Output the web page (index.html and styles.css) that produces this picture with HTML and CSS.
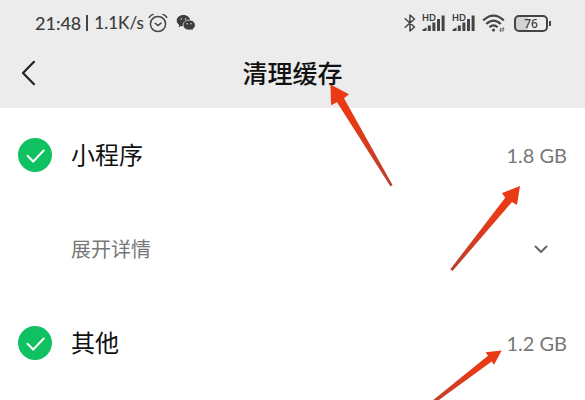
FILE: index.html
```html
<!DOCTYPE html>
<html lang="zh-CN">
<head>
<meta charset="UTF-8">
<meta name="viewport" content="width=device-width, initial-scale=1.0">
<title>清理缓存</title>
<link rel="stylesheet" href="styles.css">
</head>
<body>
<header class="top">
    <div class="status">
        <div class="status-left">
            <span class="time">21:48</span>
            <span class="divider"></span>
            <span class="speed">1.1K/s</span>
            <svg class="alarm" width="20" height="20" viewBox="0 0 20 20" fill="none" stroke="#444" stroke-width="1.5" stroke-linecap="round">
                <circle cx="10" cy="11" r="7.6"/>
                <path d="M7.2 10.2l2.800 2.400 3-2.400M1.200 4.400Q2.600 2.200 5 1.400M18.800 4.400Q17.400 2.200 15 1.400"/>
            </svg>
            <svg class="wechat" width="20" height="18" viewBox="0 0 20 18">
                <path fill="#3c3c3c" d="M7.400 1C3.500 1 .7 3.500.7 6.600c0 1.900 1 3.400 2.500 4.500l-.6 2.100 2.400-1.300c.8.2 1.600.3 2.400.3 3.900 0 6.800-2.500 6.800-5.600S11.300 1 7.400 1z"/>
                <path fill="#3c3c3c" stroke="#ececec" stroke-width=".8" d="M13.100 6.100c-3.500 0-6 2.200-6 5s2.500 5 6 5c.7 0 1.400-.1 2-.3l2.200 1.200-.5-1.900c1.500-1 2.500-2.300 2.500-4 0-2.800-2.700-5-6.200-5z"/>
                <g fill="#ececec">
                    <circle cx="5.200" cy="5" r=".8"/><circle cx="9.600" cy="5" r=".8"/>
                    <circle cx="11.200" cy="9.800" r=".7"/><circle cx="15" cy="9.800" r=".7"/>
                </g>
            </svg>
        </div>
        <div class="status-right">
            <svg width="12" height="20" viewBox="0 0 12 20" fill="none" stroke="#444" stroke-width="1.500" stroke-linejoin="round" stroke-linecap="round">
                <path d="M1.200 5.800l9.300 8.200L6 18V2l4.500 4-9.300 8.200"/>
            </svg>
            <div class="signal">
                <span class="hd">HD</span>
                <svg width="24" height="18" viewBox="0 0 24 18" fill="#444">
                    <path d="M.5 17v-1.500l4-2v3.500zM5.800 11.500h3V17h-3zM10.400 8.500h3V17h-3zM15 5h3v12h-3zM19.600 1.500h3V17h-3z"/>
                </svg>
            </div>
            <div class="signal">
                <span class="hd">HD</span>
                <svg width="24" height="18" viewBox="0 0 24 18" fill="#444">
                    <path d="M.5 17v-1.500l4-2v3.500zM5.800 11.500h3V17h-3zM10.400 8.500h3V17h-3zM15 5h3v12h-3zM19.600 1.500h3V17h-3z"/>
                </svg>
            </div>
            <svg class="wifi" width="24" height="20" viewBox="0 0 24 20" fill="none" stroke="#444" stroke-width="2.200">
                <path d="M1.200 7.400Q11.500-2.200 21.800 7.400M4.300 11Q11.500 4.200 18.700 11M7.400 14.300Q11.500 10.500 15.600 14.300"/>
                <circle cx="11.500" cy="17" r="1.600" fill="#444" stroke="none"/>
                <path stroke-width="1" d="M18.800 14.800v3.700M18.800 18.500l-1.300-1.200M21 18.500v-3.700l1.300 1.200"/>
            </svg>
            <div class="battery"><span class="level">76</span></div>
        </div>
    </div>
    <div class="nav">
        <button type="button" class="back" aria-label="返回">
            <svg width="16" height="26" viewBox="0 0 16 26" fill="none" stroke="#222" stroke-width="2.200" stroke-linecap="round" stroke-linejoin="round">
                <path d="M14 1.800L3 13l11 11.200"/>
            </svg>
        </button>
        <h1 class="title">清理缓存</h1>
    </div>
</header>

<main class="list">
    <div class="row">
        <span class="check">
            <input type="checkbox" id="mini" checked>
            <svg viewBox="0 0 34 34"><path d="M9.500 17.800l5.700 5.700L25.700 12.500"/></svg>
        </span>
        <label class="name" for="mini">小程序</label>
        <span class="size">1.8 GB</span>
    </div>
    <button type="button" class="row details">
        <span class="more">展开详情</span>
        <svg class="chevron" width="14" height="10" viewBox="0 0 14 10" fill="none" stroke="#666" stroke-width="2" stroke-linecap="round" stroke-linejoin="round">
            <path d="M1.500 2.500L7 8 12.500 2.500"/>
        </svg>
    </button>
    <div class="row">
        <span class="check">
            <input type="checkbox" id="other" checked>
            <svg viewBox="0 0 34 34"><path d="M9.500 17.800l5.700 5.700L25.700 12.500"/></svg>
        </span>
        <label class="name" for="other">其他</label>
        <span class="size">1.2 GB</span>
    </div>
</main>

<!-- red pointers over the title and the two sizes -->
<svg class="arrows" width="585" height="400" viewBox="0 0 585 400" aria-hidden="true">
    <defs>
        <linearGradient id="a1" gradientUnits="userSpaceOnUse" x1="331" y1="85" x2="391" y2="186"><stop offset=".3" stop-color="#ea3a15"/><stop offset="1" stop-color="#b9402f"/></linearGradient>
        <linearGradient id="a2" gradientUnits="userSpaceOnUse" x1="520" y1="186" x2="451" y2="270"><stop offset=".3" stop-color="#ea3a15"/><stop offset="1" stop-color="#b9402f"/></linearGradient>
        <linearGradient id="a3" gradientUnits="userSpaceOnUse" x1="502" y1="350" x2="425" y2="407"><stop offset=".3" stop-color="#ea3a15"/><stop offset="1" stop-color="#b9402f"/></linearGradient>
    </defs>
    <path fill="url(#a1)" d="M330.500 84.500L349 94.300l-5 4L392.500 185l-2 1.500L337 102.300l-6 3z"/>
    <path fill="url(#a2)" d="M520 186l-3 19-5-3L452.500 271l-2.200-1.700L505.200 197.700l-3.200-4.700z"/>
    <path fill="url(#a3)" d="M501.700 350.500L494 364.800l-2.300-3.300L437.500 401h-5.500L488 355.700l-2.400-3.400z"/>
</svg>
</body>
</html>
```

FILE: styles.css
```css
* {
    box-sizing: border-box;
}
body {
    margin: 0;
    background: #fff;
    color: #111;
    font-family: Lato, "Noto Sans CJK SC", sans-serif;
}
button {
    margin: 0;
    padding: 0;
    border: none;
    background: none;
    font-family: inherit;
    cursor: pointer;
}
svg {
    display: block;
    flex: none;
}
.top {
    padding-bottom: 8px;
    background: #ececec;
}
.status {
    display: flex;
    justify-content: space-between;
    align-items: center;
    height: 46px;
    padding: 0 34px 0 35px;
    color: #3c3c3c;
}
.status-left,
.status-right {
    display: flex;
    align-items: center;
}
.status-left {
    gap: 4px;
    font-size: 18px;
    font-weight: 500;
    line-height: 24px;
}
.speed {
    font-size: 17px;
}
.divider {
    width: 2px;
    height: 16px;
    margin: 0 2px 0 1px;
    background: #444;
}
.wechat {
    margin-left: 4px;
}
.status-right {
    gap: 6px;
}
.signal {
    display: grid;
}
.signal > * {
    grid-area: 1 / 1;
}
.hd {
    font-size: 9px;
    font-weight: bold;
    line-height: 8px;
}
.battery {
    display: flex;
    align-items: center;
    margin-left: 2px;
}
.battery::after {
    content: "";
    width: 2px;
    height: 5px;
    margin-left: 1px;
    background: #444;
}
.level {
    width: 34px;
    border: 2px solid #444;
    border-radius: 5px;
    background: linear-gradient(90deg, #d2d2d2 40%, #ececec 40%);
    font-family: "Noto Sans", sans-serif;
    font-size: 12px;
    font-weight: 500;
    line-height: 13px;
    text-align: center;
}
.nav {
    display: grid;
    grid-template-columns: 40px 1fr 40px;
    align-items: center;
    height: 54px;
    padding: 0 20px;
}
.title {
    margin: 0;
    font-size: 25px;
    font-weight: 500;
    line-height: 36px;
    text-align: center;
}
.row {
    display: flex;
    align-items: center;
    width: 100%;
    height: 94px;
    padding: 0 18px;
}
.check {
    display: grid;
    width: 34px;
    height: 34px;
    margin-right: 19px;
}
.check > * {
    grid-area: 1 / 1;
}
.check input {
    appearance: none;
    width: 34px;
    height: 34px;
    margin: 0;
    border: 1px solid #bbb;
    border-radius: 50%;
}
.check input:checked {
    border: none;
    background: #0fc160;
}
.check svg {
    fill: none;
    stroke: #fff;
    stroke-width: 2;
    stroke-linecap: round;
    pointer-events: none;
}
.check input:not(:checked) + svg {
    visibility: hidden;
}
.name {
    flex: 1;
    font-size: 24px;
    line-height: 36px;
}
.size {
    color: #777;
    font-size: 20px;
    line-height: 28px;
}
.details {
    justify-content: space-between;
    padding: 0 37px 0 71px;
}
.more {
    color: #777;
    font-size: 20px;
    line-height: 28px;
}
.arrows {
    position: absolute;
    top: 0;
    left: 0;
    pointer-events: none;
}
```
